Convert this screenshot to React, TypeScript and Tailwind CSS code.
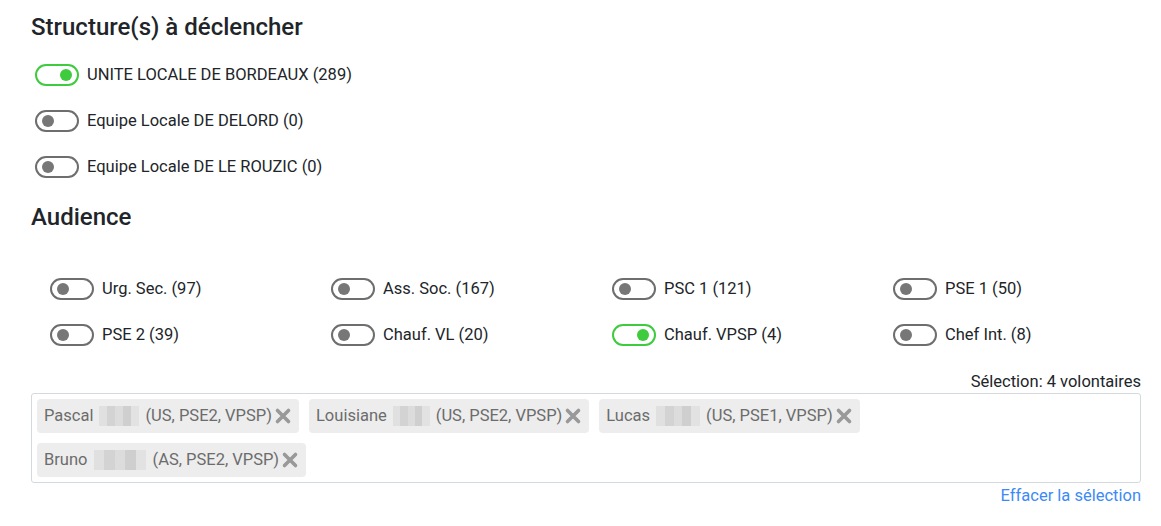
import { useState } from 'react';

type Item = { label: string; on: boolean };

function Toggle({ on }: { on: boolean }) {
  return (
    <span
      className={`relative inline-block w-[44px] h-[22px] rounded-full border-2 shrink-0 ${
        on ? 'border-[#3ecb3e]' : 'border-[#6e6e6e]'
      }`}
    >
      <span
        className={`absolute top-[3px] w-[12px] h-[12px] rounded-full ${
          on ? 'right-[5px] bg-[#3ecb3e]' : 'left-[5px] bg-[#777777]'
        }`}
      />
    </span>
  );
}

function SwitchRow({ item }: { item: Item }) {
  return (
    <div className="flex items-center h-[46px]">
      <Toggle on={item.on} />
      <span className="ml-[8px] text-[16.5px] text-[#212529]">{item.label}</span>
    </div>
  );
}

// pixelated blur standing in for a hidden surname
function Blur({ w }: { w: number }) {
  return (
    <span
      className="inline-flex mx-[6px] h-[20px] overflow-hidden align-middle"
      style={{ width: w }}
    >
      <span className="flex-1 bg-[#e0e0e0]" />
      <span className="flex-1 bg-[#d3d3d3]" />
      <span className="flex-1 bg-[#dcdcdc]" />
      <span className="flex-1 bg-[#cfcfcf]" />
      <span className="flex-1 bg-[#e2e2e2]" />
    </span>
  );
}

function Tag({ first, blur, roles }: { first: string; blur: number; roles: string }) {
  return (
    <span className="inline-flex items-center h-[34px] pl-[7px] pr-[7px] mr-[10px] mb-[10px] bg-[#ededed] rounded text-[16.5px] text-[#6c6c6c]">
      {first}
      <Blur w={blur} />
      {roles}
      <svg width="18" height="18" viewBox="0 0 18 18" className="ml-[2px]">
        <path d="M3.5 3.5 L14.5 14.5 M14.5 3.5 L3.5 14.5" stroke="#999999" strokeWidth="3.6" strokeLinecap="round" />
      </svg>
    </span>
  );
}

export default function App() {
  const [structures] = useState<Item[]>([
    { label: 'UNITE LOCALE DE BORDEAUX (289)', on: true },
    { label: 'Equipe Locale DE DELORD (0)', on: false },
    { label: 'Equipe Locale DE LE ROUZIC (0)', on: false },
  ]);

  const audience: Item[] = [
    { label: 'Urg. Sec. (97)', on: false },
    { label: 'Ass. Soc. (167)', on: false },
    { label: 'PSC 1 (121)', on: false },
    { label: 'PSE 1 (50)', on: false },
    { label: 'PSE 2 (39)', on: false },
    { label: 'Chauf. VL (20)', on: false },
    { label: 'Chauf. VPSP (4)', on: true },
    { label: 'Chef Int. (8)', on: false },
  ];

  return (
    <div className="w-[1161px] h-[526px] bg-white pl-[31px] pr-[20px] pt-[12px] font-['Roboto','Liberation_Sans',Arial,sans-serif] text-[#212529]">
      <h2 className="text-[24px] font-medium leading-[30px]">Structure(s) à déclencher</h2>

      <div className="mt-[10px] pl-[4px]">
        {structures.map((s) => (
          <SwitchRow key={s.label} item={s} />
        ))}
      </div>

      <h2 className="mt-[12px] text-[24px] font-medium leading-[30px]">Audience</h2>

      <div className="mt-[34px] pl-[19px] grid grid-cols-[281px_281px_281px_281px]">
        {audience.map((a) => (
          <SwitchRow key={a.label} item={a} />
        ))}
      </div>

      <div className="mt-[13px] text-right text-[16.5px] leading-[22px]">Sélection: 4 volontaires</div>

      <div className="border border-[#d4d9de] rounded-[3px] h-[90px] pt-[5px] pl-[5px] pr-[5px] flex flex-wrap content-start">
        <Tag first="Pascal" blur={40} roles="(US, PSE2, VPSP)" />
        <Tag first="Louisiane" blur={37} roles="(US, PSE2, VPSP)" />
        <Tag first="Lucas" blur={44} roles="(US, PSE1, VPSP)" />
        <span className="basis-full h-0" />
        <Tag first="Bruno" blur={53} roles="(AS, PSE2, VPSP)" />
      </div>

      <div className="mt-[1px] text-right">
        <a className="text-[16.5px] text-[#3d8af7] leading-[22px] cursor-pointer">Effacer la sélection</a>
      </div>
    </div>
  );
}
